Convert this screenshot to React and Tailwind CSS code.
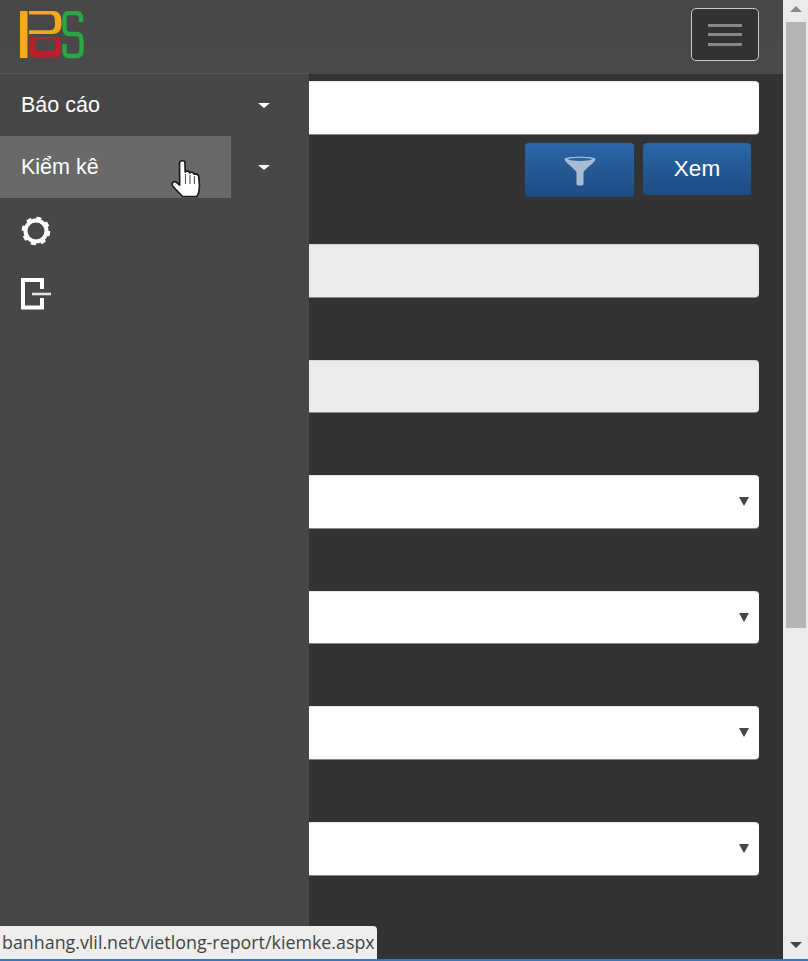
import React from "react";

const fields = [
  { id: "from", kind: "disabled" },
  { id: "to", kind: "disabled" },
  { id: "store", kind: "select" },
  { id: "group", kind: "select" },
  { id: "type", kind: "select" },
  { id: "status", kind: "select" },
];

function Logo() {
  return (
    <svg width="66" height="48" viewBox="0 0 66 48" className="block">
      <rect x="0" y="0" width="7.5" height="47" fill="#f5a81c" />
      <path
        fillRule="evenodd"
        d="M9 0 H32 C38.5 0 41.5 3 41.5 11 V12 C41.5 20 38.5 23 32 23 H9 V19.2 H30 C34 19.2 35 17 35 12 V11 C35 6 34 3.4 30 3.4 H9 Z"
        fill="#f0a81e"
      />
      <path
        fillRule="evenodd"
        d="M15 26 H35 C39.5 26 41 28 41 32 V40 C41 44.5 39 46.5 35 46.5 H15 C11 46.5 9 44.5 9 40 V32 C9 28 10.5 26 15 26 Z M19 28.5 C16.5 28.5 15.5 30 15.5 32 V36 C15.5 38 16.5 39.5 19 39.5 H32 C34 39.5 35.5 38 35.5 36 V32 C35.5 30 34.5 28.5 32 28.5 Z"
        fill="#b8202c"
      />
      <path d="M61 11 V7 C61 3 59 2 56 2 H49 C45 2 44.5 4 44.5 8 V17 C44.5 21 46 23 50 23 H56 C60 23 61.5 25 61.5 29 V39 C61.5 43 60 45 56 45 H49 C45 45 44.5 43 44.5 39 V33" fill="none" stroke="#27a844" strokeWidth="4.4" />
    </svg>
  );
}

function Caret() {
  return <div className="h-0 w-0 border-x-[6px] border-t-[5px] border-x-transparent border-t-white" />;
}

function GearIcon() {
  return (
    <svg width="33" height="30" viewBox="0 0 33 30" className="block">
      <circle cx="16" cy="15" r="10.5" fill="none" stroke="#fff" strokeWidth="4" />
      <circle cx="16" cy="15" r="13" fill="none" stroke="#fff" strokeWidth="2.6" strokeDasharray="5.1 5.1" />
    </svg>
  );
}

function ExitIcon() {
  return (
    <svg width="33" height="32" viewBox="0 0 33 32" className="block">
      <path d="M22 11 V2 H3 V29.5 H22 V20" fill="none" stroke="#fff" strokeWidth="4" />
      <path d="M12 16 H31" fill="none" stroke="#e4e4e4" strokeWidth="2.6" />
    </svg>
  );
}

function HandCursor() {
  return (
    <svg width="30" height="40" viewBox="0 0 30 40" className="pointer-events-none absolute left-[171px] top-[23px]">
      <path
        d="M8.5 4 C8.5 1 14 1 14 4 L14.2 13 C15.5 11.5 18.5 12 18.8 14 C20 12.7 22.8 13.2 23 15.2 C24.5 14.5 27.5 15 27.7 17.5 L28.5 27 C28.5 31 27.5 35 26 37.5 L11.5 37.5 C8.5 34 4.5 30.5 1.7 27 C0 24.5 2.5 21.5 5 23 L8.7 26 Z"
        fill="#fff"
        stroke="#1c1c1c"
        strokeWidth="1.7"
        strokeLinejoin="round"
      />
      <path d="M14.5 15 V25 M19 16 V25 M23.4 17 V25" stroke="#555" strokeWidth="1.1" />
    </svg>
  );
}

function Field({ kind }) {
  const isDisabled = kind === "disabled";
  return (
    <div
      className={`mt-[63px] flex h-[52.6px] items-center justify-end rounded-[4px] pr-[10px] shadow-[inset_0_1px_1px_rgba(0,0,0,0.12),0_1px_0_rgba(190,190,190,0.6)] ${
        isDisabled ? "bg-[#ebebeb]" : "bg-white"
      }`}
    >
      {!isDisabled && <div className="h-0 w-0 border-x-[5px] border-t-[9px] border-x-transparent border-t-[#444]" />}
    </div>
  );
}

function SideMenu() {
  return (
    <nav className="absolute left-0 top-[73px] bottom-0 z-10 w-[309px] border-t border-[#555] bg-[#474747] text-[21.5px] text-white">
      <div className="flex h-[62px] items-center">
        <div className="flex h-full w-[231px] items-center pl-[21px]">Báo cáo</div>
        <div className="flex flex-1 justify-center pr-[12px]">
          <Caret />
        </div>
      </div>
      <div className="relative flex h-[62px] items-center">
        <div className="flex h-full w-[231px] items-center bg-[#696969] pl-[21px]">Kiểm kê</div>
        <div className="flex flex-1 justify-center pr-[12px]">
          <Caret />
        </div>
        <HandCursor />
      </div>
      <div className="h-[62px] pl-[20px] pt-[18px]">
        <GearIcon />
      </div>
      <div className="h-[62px] pl-[20px] pt-[18px]">
        <ExitIcon />
      </div>
    </nav>
  );
}

function Scrollbar() {
  return (
    <div className="flex h-full w-[25px] flex-col items-center bg-[#ebebeb]">
      <div className="mt-[6px] h-0 w-0 border-x-[6px] border-b-[6px] border-x-transparent border-b-[#8a8a8a]" />
      <div className="ml-[1px] mt-[10px] h-[606px] w-[20px] bg-[#b4b4b4]" />
      <div className="mt-auto mb-[11px] h-0 w-0 border-x-[6px] border-t-[6px] border-x-transparent border-t-[#444]" />
    </div>
  );
}

export default function App() {
  return (
    <div
      className="relative flex h-[961px] w-[808px] flex-col overflow-hidden bg-[#333]"
      style={{ fontFamily: '"Liberation Sans", Arial, sans-serif' }}
    >
      <div className="flex min-h-0 flex-1">
        <div className="relative w-[783px] bg-[#333]">
          <header className="flex h-[74px] items-start justify-between bg-gradient-to-b from-[#474747] to-[#4a4a4a] pl-[20px] pr-[24px] pt-[8px]">
            <div className="pt-[3px]">
              <Logo />
            </div>
            <button className="flex h-[53px] w-[68px] flex-col items-center justify-center gap-[6.5px] rounded-[5px] border border-[#c8c8c8] bg-[#333]">
              <span className="h-[3px] w-[34px] bg-[#888]" />
              <span className="h-[3px] w-[34px] bg-[#888]" />
              <span className="h-[3px] w-[34px] bg-[#888]" />
            </button>
          </header>

          <main className="pl-[24px] pr-[24px] pt-[7px]">
            <div className="h-[53px] rounded-[4px] bg-white shadow-[inset_0_1px_1px_rgba(0,0,0,0.12),0_1px_0_rgba(190,190,190,0.6)]" />
            <div className="mt-[9px] flex items-start justify-end gap-[9px] pr-[8px]">
              <button className="flex h-[54px] w-[109px] items-center justify-center rounded-[4px] bg-gradient-to-b from-[#2a67a9] to-[#1f4b82]">
                <svg width="32" height="31" viewBox="0 0 32 31" className="block">
                  <path d="M0.5 4 C0.5 1 31.5 1 31.5 4 C31.5 7 22 13 19.5 17 V29 C19.5 31 12.5 31 12.5 29 V17 C10 13 0.5 7 0.5 4 Z" fill="#a9bdd2" />
                  <ellipse cx="16" cy="4.3" rx="12" ry="1.6" fill="#2a67a9" />
                </svg>
              </button>
              <button className="flex h-[52px] w-[108px] items-center justify-center rounded-[4px] bg-gradient-to-b from-[#2a67a9] to-[#1f4b82] text-[22.5px] text-white">
                Xem
              </button>
            </div>
            <div className="h-[47px] -mb-[63px]" />
            {fields.map((f) => (
              <Field key={f.id} kind={f.kind} />
            ))}
          </main>

          <SideMenu />
        </div>
        <Scrollbar />
      </div>
      <div className="h-[2px] bg-[#3a76b8]" />
      <div
        className="absolute bottom-[2px] left-0 z-20 flex h-[33px] w-[377px] items-center whitespace-nowrap rounded-tr-[4px] bg-[#eeeeee] pl-[2px] text-[17.85px] text-[#444]"
        style={{ fontFamily: '"Open Sans", sans-serif' }}
      >
        banhang.vlil.net/vietlong-report/kiemke.aspx
      </div>
    </div>
  );
}
